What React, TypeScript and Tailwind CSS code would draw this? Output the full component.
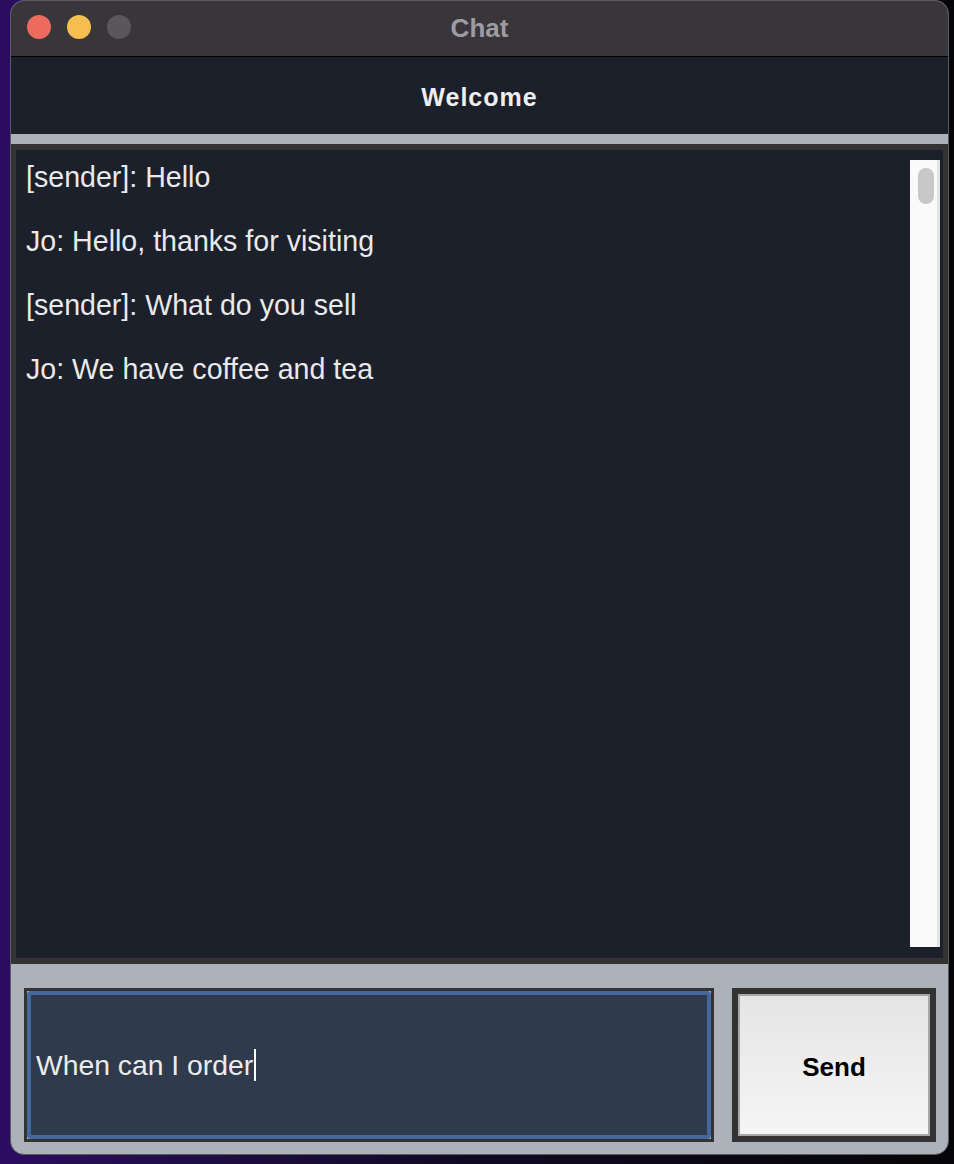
import { useState } from "react";

const messages = [
  "[sender]: Hello",
  "Jo: Hello, thanks for visiting",
  "[sender]: What do you sell",
  "Jo: We have coffee and tea",
];

const font = "font-['Liberation_Sans',Arial,Helvetica,sans-serif]";

const TrafficLights = () => (
  <div className="absolute left-[16px] top-[14px] flex gap-[16px]">
    <span className="h-[24px] w-[24px] rounded-full bg-[#ed6a5e]" />
    <span className="h-[24px] w-[24px] rounded-full bg-[#f5bf4f]" />
    <span className="h-[24px] w-[24px] rounded-full bg-[#59575c]" />
  </div>
);

const App = () => {
  const [draft] = useState("When can I order");

  return (
    <div
      className={`${font} flex h-[1164px] w-[954px] bg-gradient-to-r from-[#2b0d60] via-[#0f0a22] to-[#060608] pl-[10px] pr-[5px] pb-[9px]`}
    >
      {/* Window */}
      <div className="flex h-[1155px] w-[939px] flex-col overflow-hidden rounded-[14px] border border-[#5b5a60] bg-[#adb1b9]">
        {/* Title bar */}
        <div className="relative flex h-[56px] shrink-0 items-center justify-center border-b border-black bg-[#38363b]">
          <TrafficLights />
          <span className="text-[26px] font-bold text-[#9e9ca2]">Chat</span>
        </div>

        {/* Header */}
        <div className="flex h-[77px] shrink-0 items-center justify-center bg-[#1b202a] pt-[4px]">
          <span className="text-[25px] font-bold tracking-[1px] text-[#eeeeee]">
            Welcome
          </span>
        </div>

        <div className="h-[10px] shrink-0 bg-[#adb1b9]" />

        {/* Chat log */}
        <div className="flex h-[820px] shrink-0 border-x-[5px] border-y-[6px] border-[#333333] bg-[#1b202a]">
          <div className="flex-1 pl-[10px] pt-[11px]">
            {messages.map((m, i) => (
              <p key={i} className="mb-[32px] text-[28.6px] leading-[32px] text-[#e9e9ea]">
                {m}
              </p>
            ))}
          </div>
          <div className="mr-[3px] mt-[10px] mb-[11px] w-[30px] border-r-[3px] border-[#e4e4e4] bg-[#fafafa] pl-[8px] pt-[8px]">
            <div className="h-[36px] w-[16px] rounded-full bg-[#c8c8c8]" />
          </div>
        </div>

        {/* Input row */}
        <div className="flex flex-1 gap-[18px] pl-[13px] pr-[12px] pt-[24px]">
          <div className="h-[154px] w-[690px] border-[3px] border-[#333333]">
            <div className="flex h-full items-center rounded-[4px] border-[4px] border-[#46679b] bg-[#2f3b4d] pl-[5px]">
              <span className="text-[28.3px] leading-[32px] text-[#ececec]">{draft}</span>
              <span className="ml-[1px] h-[32px] w-[2px] bg-white" />
            </div>
          </div>
          <button className="h-[154px] w-[204px] border-[6px] border-[#333333]">
            <div className="flex h-full items-center justify-center border-2 border-[#a8a8a8] bg-gradient-to-b from-[#e5e5e5] to-[#f5f5f5] pt-[4px]">
              <span className="text-[26px] font-bold text-black">Send</span>
            </div>
          </button>
        </div>
      </div>
    </div>
  );
};

export default App;
